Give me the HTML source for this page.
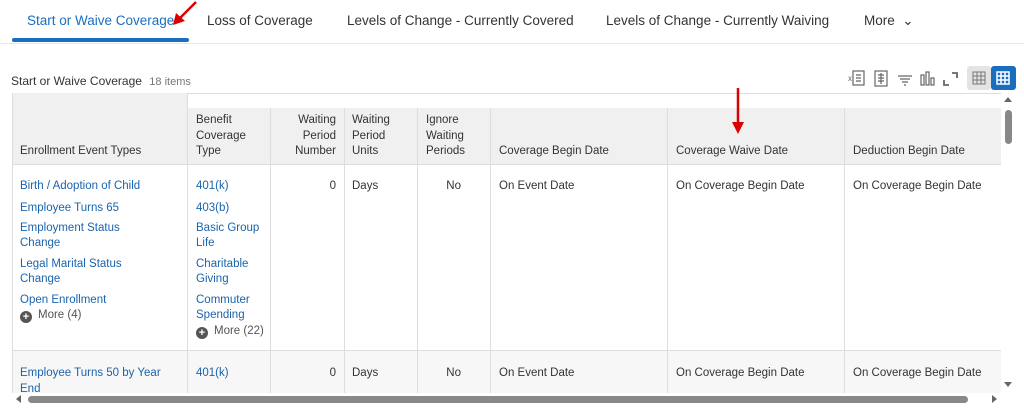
<!DOCTYPE html>
<html><head><style>
*{margin:0;padding:0;box-sizing:border-box}
body{width:1024px;height:414px;overflow:hidden;background:#fff;font-family:"Liberation Sans",sans-serif;color:#333;position:relative}
.a{position:absolute}
.tab{position:absolute;top:13px;font-size:13.5px;color:#333}
.c{position:absolute;font-size:11.5px;line-height:15.5px}
.l{color:#1a64ad}
.h{color:#333}
.vl{position:absolute;width:1px;background:#ddd}
.plus{display:inline-block;width:12px;height:12px;border-radius:50%;background:#555;color:#fff;font-size:11px;line-height:12px;text-align:center;font-weight:bold;margin-right:6px;vertical-align:-2px}
</style></head><body>
<div class="tab" style="left:27px;color:#1a6ec2">Start or Waive Coverage</div>
<svg class="a" style="left:170px;top:0" width="30" height="28"><path d="M26 2 L8 20" stroke="#d00" stroke-width="2.5"/><path d="M3 25 L6 13 L15 21 Z" fill="#d00"/></svg>
<div class="tab" style="left:207px">Loss of Coverage</div>
<div class="tab" style="left:347px">Levels of Change - Currently Covered</div>
<div class="tab" style="left:606px">Levels of Change - Currently Waiving</div>
<div class="tab" style="left:864px">More &nbsp;⌄</div>
<div class="a" style="left:12px;top:38px;width:177px;height:4px;background:#1a6ec2;border-radius:2px"></div>
<div class="a" style="left:0;top:43px;width:1024px;height:1px;background:#e8e8e8"></div>
<div class="a" style="left:11px;top:74px;font-size:12px;color:#333">Start or Waive Coverage <span style="color:#777;font-size:11px;margin-left:4px">18 items</span></div>
<svg class="a" style="left:848px;top:69px" width="115" height="20" fill="none" stroke="#666" stroke-width="1.2">
<text x="0" y="12" font-size="8" fill="#666" stroke="none" font-family="Liberation Sans">x</text>
<rect x="5" y="2" width="11" height="14"/><path d="M8 6H13M8 9H13M8 12H13"/>
<rect x="27" y="2" width="12" height="15"/><path d="M30 6H36M30 9H36M30 12H36M33 4V15"/>
<path d="M50 7H64M52 10H62M54 13H60M56 16H58"/>
<rect x="73" y="6" width="3" height="10"/><rect x="78" y="3" width="3" height="13"/><rect x="83" y="9" width="3" height="7"/>
<path d="M96 11V16H101M104 4H109V9" stroke-width="1.8"/>
</svg>
<div class="a" style="left:967px;top:66px;width:24px;height:24px;background:#e4e4e4;border-radius:3px"></div>
<div class="a" style="left:991px;top:66px;width:25px;height:24px;background:#1a6ec2;border-radius:3px"></div>
<svg class="a" style="left:972px;top:71px" width="40" height="14"><rect x="1" y="1" width="12" height="12" fill="none" stroke="#777"/><path d="M1 5H13M1 9H13M5 1V13M9 1V13" stroke="#777"/><rect x="25" y="1" width="12" height="12" fill="none" stroke="#fff" stroke-width="1.5"/><path d="M25 5H37M25 9H37M29 1V13M33 1V13" stroke="#fff" stroke-width="1.5"/></svg>
<div class="a" style="left:187px;top:93px;width:814px;height:1px;background:#ddd"></div>
<div class="a" style="left:12px;top:93px;width:175px;height:71px;background:#f0f0f0"></div>
<div class="a" style="left:187px;top:108px;width:814px;height:56px;background:#f0f0f0"></div>
<div class="a" style="left:12px;top:164px;width:989px;height:1px;background:#ddd"></div>
<div class="a" style="left:12px;top:350px;width:989px;height:46px;background:#f7f7f7;border-top:1px solid #ddd"></div>
<div class="vl" style="left:12px;top:93px;height:303px"></div>
<div class="vl" style="left:187px;top:93px;height:303px"></div>
<div class="vl" style="left:270px;top:108px;height:288px"></div>
<div class="vl" style="left:344px;top:108px;height:288px"></div>
<div class="vl" style="left:417px;top:108px;height:288px"></div>
<div class="vl" style="left:490px;top:108px;height:288px"></div>
<div class="vl" style="left:667px;top:108px;height:288px"></div>
<div class="vl" style="left:844px;top:108px;height:288px"></div>
<div class="c h" style="left:20px;top:144px">Enrollment Event Types</div>
<div class="c h" style="left:196px;top:113px">Benefit<br>Coverage<br>Type</div>
<div class="c h" style="left:270px;top:113px;width:66px;text-align:right">Waiting<br>Period<br>Number</div>
<div class="c h" style="left:352px;top:113px">Waiting<br>Period<br>Units</div>
<div class="c h" style="left:426px;top:113px">Ignore<br>Waiting<br>Periods</div>
<div class="c h" style="left:499px;top:144px">Coverage Begin Date</div>
<div class="c h" style="left:676px;top:144px">Coverage Waive Date</div>
<div class="c h" style="left:853px;top:144px">Deduction Begin Date</div>
<svg class="a" style="left:730px;top:86px" width="16" height="50"><path d="M8 2V40" stroke="#d00" stroke-width="2.5"/><path d="M2 36L8 48L14 36Z" fill="#d00"/></svg>
<div class="c l" style="left:20px;top:179px;width:165px">Birth / Adoption of Child<br><span style="line-height:26px">Employee Turns 65</span><br>Employment Status<br>Change<br><span style="display:block;height:5px"></span>Legal Marital Status<br>Change<br><span style="display:block;height:5px"></span>Open Enrollment<br><span style="color:#555"><span class="plus">+</span>More (4)</span></div>
<div class="c l" style="left:196px;top:179px;line-height:15.5px">401(k)<br><span style="line-height:26px">403(b)</span><br>Basic Group<br>Life<br><span style="display:block;height:5px"></span>Charitable<br>Giving<br><span style="display:block;height:5px"></span>Commuter<br>Spending<br><span style="color:#555"><span class="plus">+</span>More (22)</span></div>
<div class="c" style="left:270px;top:179px;width:66px;text-align:right">0</div>
<div class="c" style="left:352px;top:179px">Days</div>
<div class="c" style="left:417px;top:179px;width:44px;text-align:right">No</div>
<div class="c" style="left:499px;top:179px">On Event Date</div>
<div class="c" style="left:676px;top:179px">On Coverage Begin Date</div>
<div class="c" style="left:853px;top:179px">On Coverage Begin Date</div>
<div class="c l" style="left:20px;top:366px">Employee Turns 50 by Year<br>End</div>
<div class="c l" style="left:196px;top:366px">401(k)</div>
<div class="c" style="left:270px;top:366px;width:66px;text-align:right">0</div>
<div class="c" style="left:352px;top:366px">Days</div>
<div class="c" style="left:417px;top:366px;width:44px;text-align:right">No</div>
<div class="c" style="left:499px;top:366px">On Event Date</div>
<div class="c" style="left:676px;top:366px">On Coverage Begin Date</div>
<div class="c" style="left:853px;top:366px">On Coverage Begin Date</div>
<div class="a" style="left:0;top:393px;width:1024px;height:21px;background:#fff"></div>
<div class="a" style="left:16px;top:395px;width:0;height:0;border:4px solid transparent;border-right:5px solid #666;border-left:0"></div>
<div class="a" style="left:28px;top:396px;width:940px;height:7px;background:#888;border-radius:4px"></div>
<div class="a" style="left:992px;top:395px;width:0;height:0;border:4px solid transparent;border-left:5px solid #666;border-right:0"></div>
<div class="a" style="left:1004px;top:97px;width:0;height:0;border:4px solid transparent;border-bottom:5px solid #666;border-top:0"></div>
<div class="a" style="left:1005px;top:110px;width:7px;height:34px;background:#888;border-radius:4px"></div>
<div class="a" style="left:1004px;top:382px;width:0;height:0;border:4px solid transparent;border-top:5px solid #666;border-bottom:0"></div>
</body></html>
